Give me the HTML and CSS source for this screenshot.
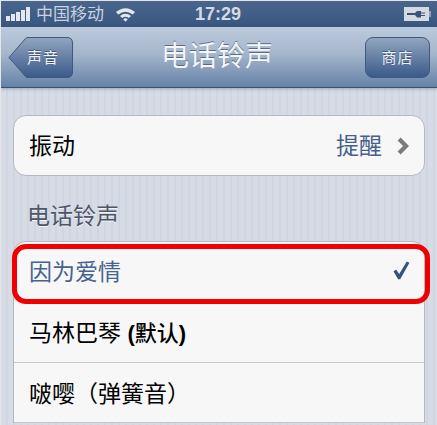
FILE: index.html
```html
<!DOCTYPE html>
<html lang="zh-CN">
<head>
<meta charset="UTF-8" />
<meta name="viewport" content="width=device-width, initial-scale=1" />
<title>电话铃声</title>
<link rel="stylesheet" href="styles.css">
</head>
<body>
  <div class="phone">

    <!-- Status bar -->
    <div class="status-bar">
      <div class="status-left">
        <div class="signal">
          <span class="bar bar1"></span>
          <span class="bar bar2"></span>
          <span class="bar bar3"></span>
          <span class="bar bar4"></span>
          <span class="bar bar5"></span>
        </div>
        <span class="carrier">中国移动</span>
        <svg class="wifi" width="21" height="16" viewBox="0 0 22 16">
          <path d="M1 6 Q11 -2 21 6 L18.5 8.6 Q11 2.8 3.5 8.6 Z" fill="#e4e8ee"/>
          <path d="M5.2 10 Q11 5.4 16.8 10 L14.5 12.2 Q11 9.6 7.5 12.2 Z" fill="#e4e8ee"/>
          <path d="M8.6 13.4 Q11 11.6 13.4 13.4 L11 16 Z" fill="#e4e8ee"/>
        </svg>
      </div>
      <div class="clock">17:29</div>
      <svg class="battery" width="27" height="14" viewBox="0 0 27 14">
        <rect x="0" y="0" width="25" height="14" fill="#d5dae2"/>
        <rect x="25" y="4" width="2" height="6" fill="#8fa0b8"/>
        <path d="M3 6 H11 L13 4 H17 V5.5 H21 V6.5 H17 V8 H21 V9 H17 V10.5 H13 L11 8 H3 Z" fill="#3a5478"/>
      </svg>
    </div>

    <!-- Nav bar -->
    <div class="nav-bar">
      <div class="nav-side">
        <div class="back-btn">
          <svg class="back-shape" width="65" height="41" viewBox="0 0 65 41">
            <defs>
              <linearGradient id="backFill" x1="0" y1="0" x2="0" y2="1">
                <stop offset="0" stop-color="#92a5bf"/>
                <stop offset="1" stop-color="#3b5a8a"/>
              </linearGradient>
            </defs>
            <path d="M1 20.5 L17.5 1.5 Q18.3 0.5 20 0.5 H59 Q64.5 0.5 64.5 6 V35 Q64.5 40.5 59 40.5 H20 Q18.3 40.5 17.5 39.5 Z" fill="url(#backFill)" stroke="#40597e"/>
          </svg>
          <span class="back-label">声音</span>
        </div>
      </div>
      <div class="nav-title">电话铃声</div>
      <div class="nav-side nav-side-right">
        <div class="store-btn">商店</div>
      </div>
    </div>

    <!-- Settings -->
    <div class="content">
      <div class="group">
        <div class="row">
          <span class="row-label">振动</span>
          <span class="row-value">提醒</span>
          <svg class="chevron" width="13" height="18" viewBox="0 0 13 18">
            <path d="M0.6 3.6 L3.6 0.6 L12 9 L3.6 17.4 L0.6 14.4 L6 9 Z" fill="#7b7b7b"/>
          </svg>
        </div>
      </div>

      <div class="section-title">电话铃声</div>

      <div class="group group-open">
        <div class="row selected">
          <span class="row-label">因为爱情</span>
          <svg class="check" width="17" height="19" viewBox="0 0 18 20">
            <path d="M0.6 11 L3.2 9 L6.6 13.6 L14.6 0.6 L17.4 1.8 L7.6 19.2 L5.4 19.2 Z" fill="#36527f"/>
          </svg>
          <div class="highlight"></div>
        </div>
        <div class="row row-second">
          <span class="row-label">马林巴琴 <b>(</b><span class="medium">默认</span><b>)</b></span>
        </div>
        <div class="row row-third">
          <span class="row-label">啵嘤（弹簧音）</span>
        </div>
      </div>
    </div>

  </div>
</body>
</html>
```

FILE: styles.css
```css
/* Reset and base */
* {
  box-sizing: border-box;
}
html, body {
  height: 100%;
}
body {
  margin: 0;
  overflow: hidden;
  background: #e6e6e6;
  font-family: "Liberation Sans", "Noto Sans CJK SC", sans-serif;
}
.phone {
  width: 436px;
  height: 424px;
  margin: 1px 0 0 1px;
  overflow: hidden;
  display: flex;
  flex-direction: column;
}

/* Status bar */
.status-bar {
  height: 26px;
  flex: none;
  display: flex;
  align-items: center;
  justify-content: space-between;
  padding: 0 6px 0 5px;
  position: relative;
  background: linear-gradient(#4a668c, #395680);
  color: #c9d2df;
}
.status-left {
  display: flex;
  align-items: center;
}
.signal {
  display: flex;
  align-items: flex-end;
  gap: 1px;
  height: 14px;
  margin-right: 6px;
}
.bar {
  width: 4px;
  background: #e4e8ee;
}
.bar1 { height: 5px; }
.bar2 { height: 7px; }
.bar3 { height: 9px; }
.bar4 { height: 11px; }
.bar5 { height: 14px; }
.carrier {
  font-size: 17px;
  padding-bottom: 3px;
}
.wifi {
  margin-left: 11px;
}
.clock {
  position: absolute;
  left: 194px;
  top: 0;
  line-height: 26px;
  font-size: 18px;
  font-weight: 700;
  color: #d3dae4;
}
.battery {
  margin-left: auto;
}

/* Nav bar */
.nav-bar {
  height: 61px;
  flex: none;
  display: flex;
  align-items: center;
  justify-content: space-between;
  padding: 0 6px 0 7px;
  background: linear-gradient(#bccadd 0%, #a5b5cb 45%, #6482a8 100%);
  border-bottom: 1px solid #3d5272;
  box-shadow: 0 1px 3px rgba(50, 60, 80, 0.35);
  position: relative;
}
.nav-side {
  width: 66px;
}
.nav-side-right {
  display: flex;
  justify-content: flex-end;
}
.back-btn {
  position: relative;
  width: 65px;
  height: 41px;
}
.back-shape {
  display: block;
}
.back-label {
  position: absolute;
  left: 15px;
  top: 0;
  width: 40px;
  text-align: center;
  line-height: 41px;
  font-size: 15px;
  letter-spacing: 1px;
  color: #f1f3f6;
  text-shadow: 0 -1px 0 rgba(40, 60, 90, 0.6);
}
.nav-title {
  font-size: 28px;
  line-height: 36px;
  margin-right: 5px;
  color: #f4f6f8;
  text-shadow: 0 -1px 0 rgba(60, 75, 100, 0.7);
}
.store-btn {
  width: 65px;
  height: 41px;
  line-height: 39px;
  text-align: center;
  font-size: 15px;
  letter-spacing: 1px;
  color: #eef1f5;
  border: 1px solid #40597e;
  border-radius: 8px;
  background: linear-gradient(#92a5bf, #3b5a8a);
  text-shadow: 0 -1px 0 rgba(40, 60, 90, 0.6);
  margin-right: 1px;
}

/* Settings content */
.content {
  flex: 1;
  padding: 27px 12px 0;
  background: repeating-linear-gradient(90deg, #d6dbe6 0, #d6dbe6 5px, #d0d6e1 5px, #d0d6e1 7px);
}
.group {
  background: #f7f7f7;
  border: 1px solid #b4b8c0;
  border-radius: 13px;
}
.group-open {
  width: 412px;
  border-bottom: 0;
  border-radius: 13px 13px 0 0;
}
.row {
  height: 60px;
  display: flex;
  align-items: center;
  padding: 0 14px 0 15px;
  position: relative;
  border-bottom: 1px solid #c6c6c6;
}
.group > .row:only-child {
  height: 59px;
  border-bottom: 0;
}
.row-label {
  flex: 1;
  font-size: 23px;
  line-height: 32px;
  color: #000;
}
.row-label b {
  font-size: 22px;
  font-weight: 700;
}
.medium {
  font-size: 22px;
  font-weight: 500;
}
.row-value {
  font-size: 23px;
  line-height: 32px;
  color: #475f8b;
  margin-right: 15px;
}
.section-title {
  margin: 26px 0 11px 14px;
  font-size: 23px;
  line-height: 28px;
  color: #4e566a;
  text-shadow: 0 1px 0 rgba(255, 255, 255, 0.7);
}
.selected {
  height: 61px;
  border-bottom: 0;
}
.selected .row-label {
  color: #476390;
  padding-bottom: 2px;
}
.check {
  margin-bottom: 5px;
}
.row-second .row-label {
  padding-top: 1px;
}
.row-third .row-label {
  padding-top: 3px;
}
.highlight {
  position: absolute;
  left: -2px;
  top: 2px;
  width: 418px;
  height: 60px;
  border: 5px solid #f00000;
  border-radius: 14px;
}
```
